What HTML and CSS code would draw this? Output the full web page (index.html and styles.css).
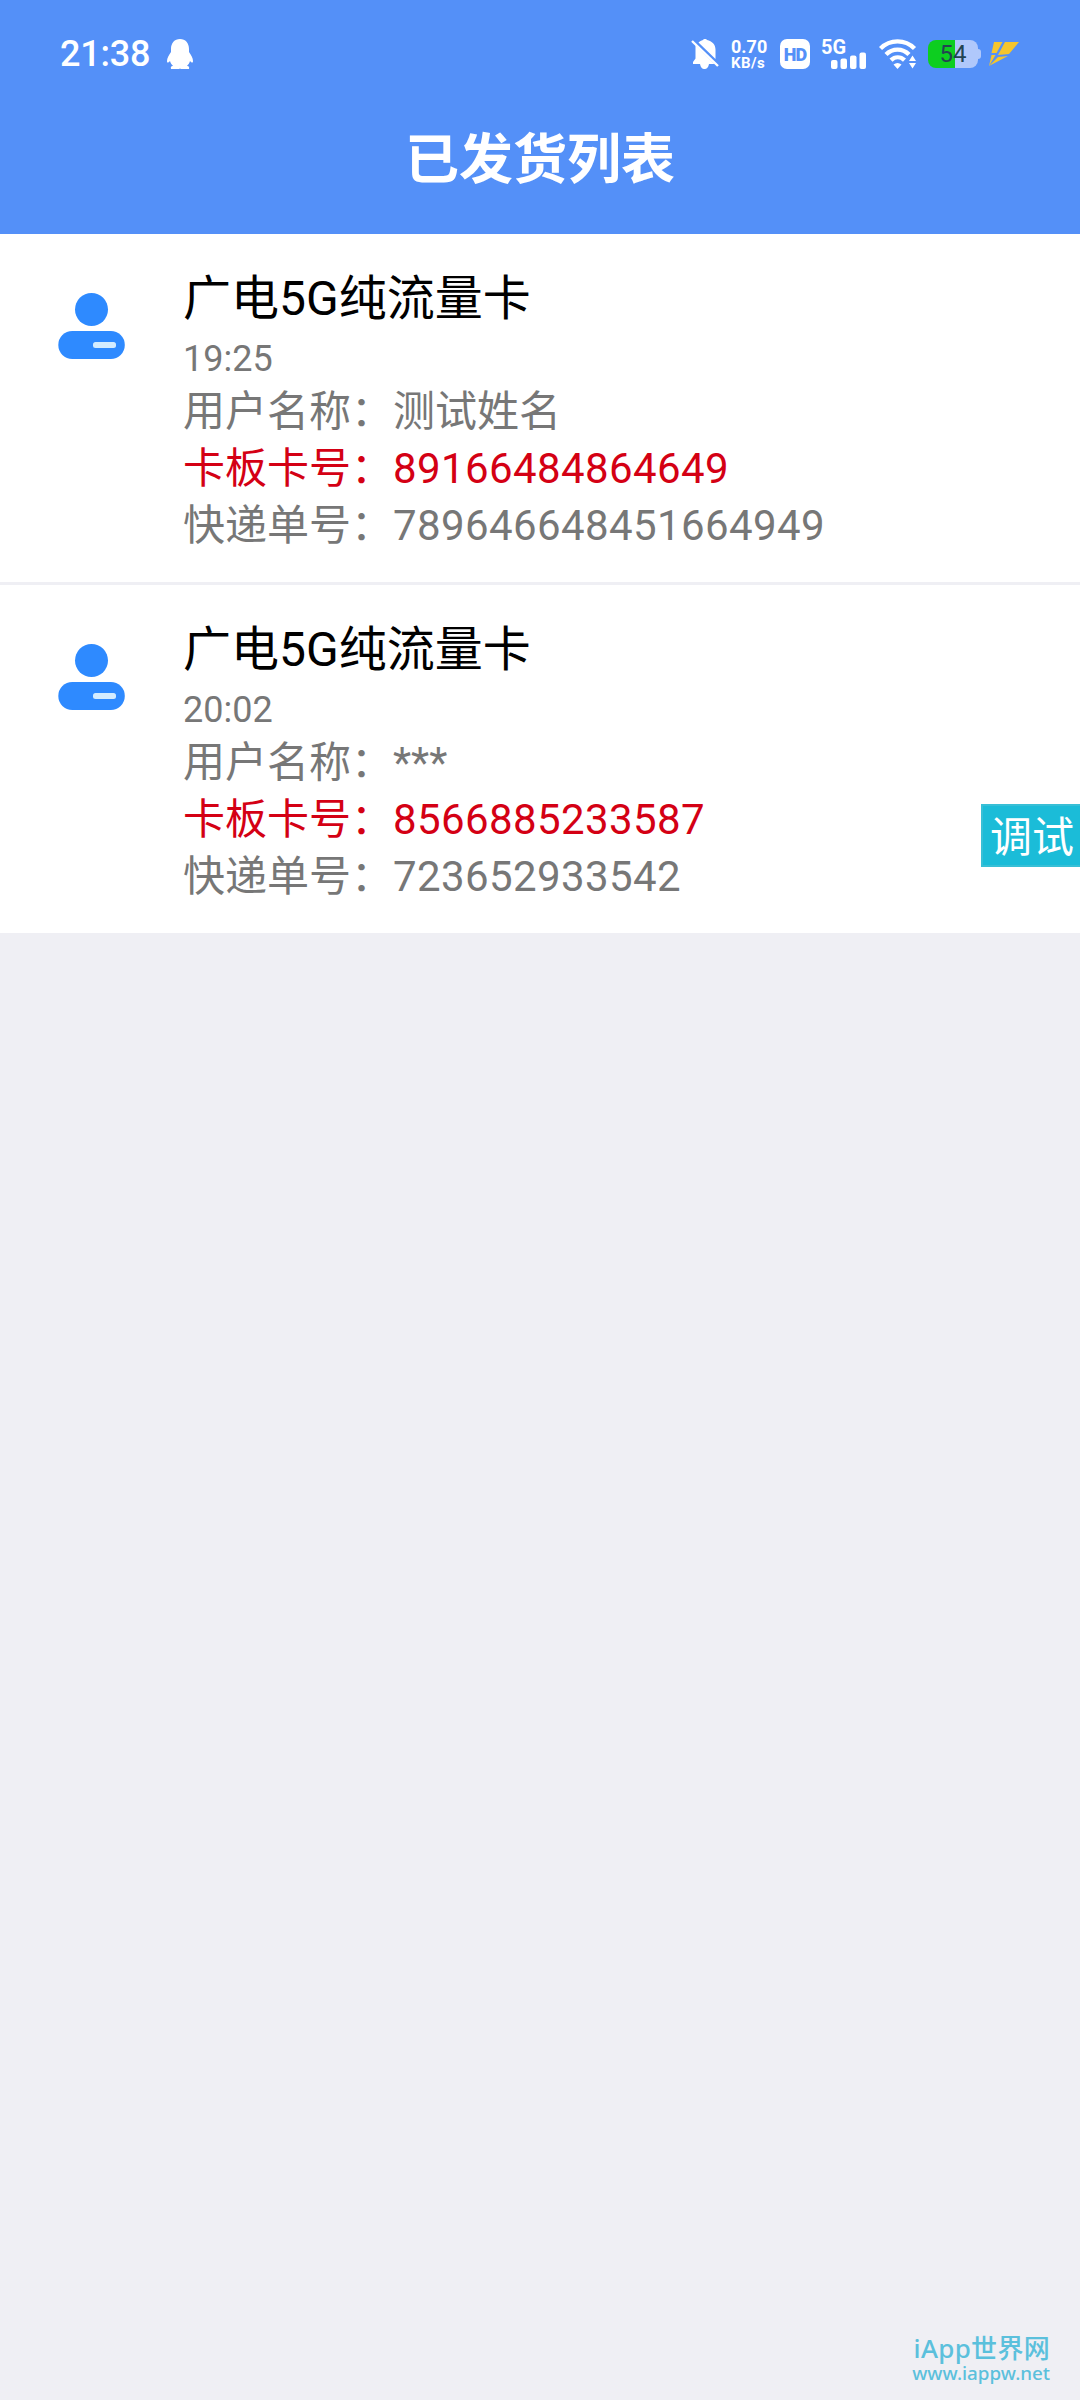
FILE: index.html
```html
<!DOCTYPE html>
<html lang="zh-CN">

<head>
    <meta charset="UTF-8" />
    <meta name="viewport" content="width=device-width, initial-scale=1.0" />
    <title>已发货列表</title>
    <link rel="stylesheet" href="styles.css">
</head>

<body>
    <header class="header">
        <div class="status-bar">
            <div class="clock">21:38</div>
            <svg class="qq" width="28" height="32" viewBox="0 0 28 32">
                <path fill="#fff" d="M14 1C8.500 1 5 5 5 11v3C3 17 1 20 1 23c0 2 1 2.200 3 0 .6 2 1.500 3.500 3 4.800-2 .5-2.500 1.200-2 3.200h8l1-.6 1 .6h8c.5-2 0-2.700-2-3.200 1.500-1.300 2.400-2.800 3-4.800 2 2.200 3 2 3 0 0-3-2-6-4-9v-3C23 5 19.500 1 14 1z" />
            </svg>
            <div class="status-icons">
                <svg class="bell" width="28" height="32" viewBox="0 0 28 32">
                    <path fill="#fff" d="M12 2c.6-1.300 3.400-1.300 4 0 5 1 8.500 4.500 8.500 9.500V21L7.500 4.500C8.700 3.300 10.200 2.400 12 2zM4.500 7l19 19H2v-2l2.500-3.500zM9 26h9c-.8 4-2.500 5-4.500 5S9.800 30 9 26z" />
                    <path stroke="#fff" stroke-width="2.400" d="M1 3l26 25" />
                </svg>
                <div class="speed">
                    <span class="speed-num">0.70</span>
                    <span class="speed-unit">KB/s</span>
                </div>
                <div class="hd">HD</div>
                <div class="signal">
                    <span class="signal-type">5G</span>
                    <svg class="bars" width="36" height="18" viewBox="0 0 36 18">
                        <g fill="#fff">
                            <rect x="0" y="8" width="6.500" height="9" rx="2" />
                            <rect x="9.500" y="6.500" width="6.500" height="10.500" rx="2" />
                            <rect x="19" y="3.500" width="6.500" height="13.500" rx="2" />
                            <rect x="28.500" y=".5" width="6.500" height="16.500" rx="2" />
                        </g>
                    </svg>
                </div>
                <svg class="wifi" width="38" height="30" viewBox="0 0 38 30">
                    <g fill="none" stroke="#fff" stroke-width="4.400">
                        <path d="M1.500 9.500C11 0 26 0 35.500 9.500" />
                        <path d="M7 15.500c6.500-6.500 16.500-6.500 23 0" />
                        <path d="M12 21.200c4-3.800 9.500-3.800 13.500 0" />
                    </g>
                    <path fill="#fff" d="M14.500 25.500c2.500-2 5.500-2 8 0l-4 4.500zM30 22l3.500-5.500L37 22zM30 24h7l-3.500 5.500z" />
                </svg>
                <div class="battery"><span>54</span></div>
                <svg class="bolt" width="32" height="26" viewBox="0 0 32 26">
                    <path fill="#f5c52d" d="M6 1h8.500L8.500 12H3.500zM17 1h14L21 13l-11 1zM3.500 14h4L1 25zM10 16l10-1L1 25z" />
                </svg>
            </div>
        </div>
        <h1>已发货列表</h1>
    </header>

    <main class="list">
        <div class="item">
            <svg class="avatar" width="68" height="68" viewBox="0 0 68 68">
                <circle cx="33.500" cy="17.500" r="16.500" fill="#2e8aff" />
                <rect x=".3" y="39" width="66.500" height="28" rx="14" fill="#2e8aff" />
                <rect x="35" y="50" width="23" height="6" rx="2.500" fill="#d3ecff" />
            </svg>
            <div class="info">
                <div class="name">广电5G纯流量卡</div>
                <div class="time">19:25</div>
                <div class="line">用户名称：测试姓名</div>
                <div class="line red">卡板卡号：<span class="num">89166484864649</span></div>
                <div class="line">快递单号：<span class="num">789646648451664949</span></div>
            </div>
        </div>
        <div class="item">
            <svg class="avatar" width="68" height="68" viewBox="0 0 68 68">
                <circle cx="33.500" cy="17.500" r="16.500" fill="#2e8aff" />
                <rect x=".3" y="39" width="66.500" height="28" rx="14" fill="#2e8aff" />
                <rect x="35" y="50" width="23" height="6" rx="2.500" fill="#d3ecff" />
            </svg>
            <div class="info">
                <div class="name">广电5G纯流量卡</div>
                <div class="time">20:02</div>
                <div class="line">用户名称：***</div>
                <div class="line red">卡板卡号：<span class="num">8566885233587</span></div>
                <div class="line">快递单号：<span class="num">723652933542</span></div>
            </div>
        </div>
    </main>

    <div class="debug">调试</div>

    <div class="watermark">
        <div class="site-name">iApp世界网</div>
        <div class="site-url">www.iappw.net</div>
    </div>
</body>

</html>
```
FILE: styles.css
```css
* {
    box-sizing: border-box;
}

body {
    margin: 0;
    height: 2400px;
    background: #efeff4;
    font-family: Roboto, "Noto Sans CJK SC", sans-serif;
    position: relative;
    overflow: hidden;
}

.header {
    height: 234px;
    background: #5490f8;
    color: #fff;
}

.status-bar {
    height: 108px;
    padding: 0 60px;
    display: flex;
    align-items: center;
}

.clock {
    font-size: 36px;
    font-weight: 500;
    letter-spacing: -0.200px;
}

.qq {
    margin-left: 16px;
}

.status-icons {
    margin-left: auto;
    display: flex;
    align-items: center;
}

.speed {
    width: 38px;
    margin-left: 12px;
    display: flex;
    flex-direction: column;
    font-weight: 700;
}

.speed-num {
    font-size: 18px;
    line-height: 17px;
}

.speed-unit {
    font-size: 15px;
    line-height: 16px;
    letter-spacing: 0.400px;
}

.hd {
    width: 30px;
    height: 30px;
    margin-left: 11px;
    border-radius: 7px;
    background: #fff;
    color: #5490f8;
    font-size: 18px;
    font-weight: 900;
    line-height: 31px;
    text-align: center;
    letter-spacing: -1px;
}

.signal {
    width: 46px;
    height: 32px;
    margin-left: 11px;
    display: flex;
    flex-direction: column;
}

.signal-type {
    height: 14px;
    font-size: 20px;
    font-weight: 700;
    line-height: 19px;
}

.bars {
    align-self: flex-end;
}

.wifi {
    margin-left: 12px;
}

.battery {
    width: 50px;
    height: 28px;
    margin-left: 11px;
    border-radius: 8px;
    background: linear-gradient(90deg, #0dce20 54%, #b0c8fb 54%);
    color: #234451;
    font-size: 24px;
    line-height: 29px;
    text-align: center;
    position: relative;
}

.battery::after {
    content: "";
    width: 3px;
    height: 10px;
    border-radius: 0 3px 3px 0;
    background: #b0c8fb;
    position: absolute;
    top: 9px;
    right: -3px;
}

.bolt {
    margin-left: 10px;
}

h1 {
    margin: 0;
    font-size: 54px;
    font-weight: 700;
    line-height: 106px;
    text-align: center;
}

.list {
    background: #fff;
}

.item {
    height: 348px;
    padding: 34px 58px 0;
    display: flex;
    gap: 57px;
}

.item + .item {
    height: 351px;
    border-top: 3px solid #efeff4;
}

.avatar {
    margin-top: 24px;
}

.name {
    color: #000;
    font-size: 48px;
    line-height: 62px;
}

.time {
    color: #777;
    font-size: 36px;
    line-height: 58px;
}

.line {
    color: #777;
    font-size: 42px;
    line-height: 57px;
}

.line:nth-child(3) {
    margin-top: -5px;
}

.num {
    letter-spacing: 0.400px;
}

.red {
    color: #d40014;
}

.debug {
    width: 99px;
    height: 63px;
    padding-left: 7px;
    border: 2px solid #38bfd6;
    border-right: 0;
    background: #1bbcd8;
    color: #fff;
    font-size: 42px;
    line-height: 63px;
    white-space: nowrap;
    position: absolute;
    top: 804px;
    right: 0;
}

.watermark {
    color: #5bc0dc;
    font-family: "Noto Sans", "Noto Sans CJK SC", sans-serif;
    font-weight: 500;
    position: absolute;
    right: 30px;
    bottom: 15px;
    text-align: right;
}

.site-name {
    font-size: 26px;
    line-height: 26px;
    letter-spacing: 0.300px;
}

.site-url {
    font-size: 18.800px;
    line-height: 24px;
}
```
